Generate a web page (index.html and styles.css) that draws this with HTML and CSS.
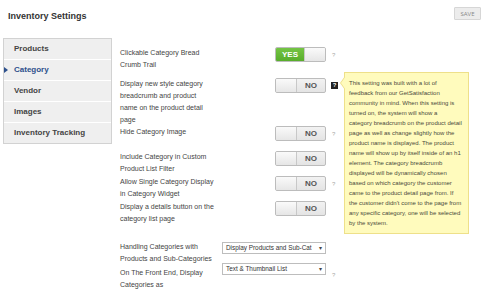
FILE: index.html
```html
<!DOCTYPE html>
<html lang="en">
<head>
	<meta charset="UTF-8">
	<title>Inventory Settings</title>
	<link rel="stylesheet" href="styles.css">
</head>
<body>
	<div class="page">
		<!-- header -->
		<div class="top">
			<h1>Inventory Settings</h1>
			<button class="save">SAVE</button>
		</div>

		<div class="main">
			<!-- left menu -->
			<ul class="side">
				<li>Products</li>
				<li class="active">Category</li>
				<li>Vendor</li>
				<li>Images</li>
				<li>Inventory Tracking</li>
			</ul>

			<!-- settings list -->
			<div class="settings">
				<div class="row gap7">
					<div class="label">Clickable Category Bread<br>Crumb Trail</div>
					<div class="ctl"><div class="toggle on"><span class="lab">YES</span><span class="knob"></span></div></div>
					<div class="help">?</div>
				</div>
				<div class="row">
					<div class="label">Display new style category<br>breadcrumb and product<br>name on the product detail<br>page</div>
					<div class="ctl"><div class="toggle off"><span class="knob"></span><span class="lab">NO</span></div></div>
					<div class="help"><span class="help_box">?</span></div>
				</div>
				<div class="row gap1">
					<div class="label">Hide Category Image</div>
					<div class="ctl"><div class="toggle off"><span class="knob"></span><span class="lab">NO</span></div></div>
					<div class="help">?</div>
				</div>
				<div class="row gap1">
					<div class="label">Include Category in Custom<br>Product List Filter</div>
					<div class="ctl"><div class="toggle off"><span class="knob"></span><span class="lab">NO</span></div></div>
					<div class="help"></div>
				</div>
				<div class="row gap1">
					<div class="label">Allow Single Category Display<br>in Category Widget</div>
					<div class="ctl"><div class="toggle off"><span class="knob"></span><span class="lab">NO</span></div></div>
					<div class="help">?</div>
				</div>
				<div class="row gap16">
					<div class="label">Display a details button on the<br>category list page</div>
					<div class="ctl"><div class="toggle off"><span class="knob"></span><span class="lab">NO</span></div></div>
					<div class="help"></div>
				</div>
				<div class="row gap2">
					<div class="label">Handling Categories with<br>Products and Sub-Categories</div>
					<div class="ctl"><div class="sel"><span class="sel_text">Display Products and Sub-Cat</span><span class="arrow">&#9662;</span></div></div>
					<div class="help"></div>
				</div>
				<div class="row">
					<div class="label">On The Front End, Display<br>Categories as</div>
					<div class="ctl"><div class="sel up"><span class="sel_text">Text &amp; Thumbnail List</span><span class="arrow">&#9662;</span></div></div>
					<div class="help">?</div>
				</div>
			</div>
		</div>

		<!-- tooltip for the breadcrumb setting -->
		<div class="tip">
			This setting was built with a lot of<br>
			feedback from our GetSatisfaction<br>
			community in mind. When this setting is<br>
			turned on, the system will show a<br>
			category breadcrumb on the product detail<br>
			page as well as change slightly how the<br>
			product name is displayed. The product<br>
			name will show up by itself inside of an h1<br>
			element. The category breadcrumb<br>
			displayed will be dynamically chosen<br>
			based on which category the customer<br>
			came to the product detail page from. If<br>
			the customer didn't come to the page from<br>
			any specific category, one will be selected<br>
			by the system.
		</div>
	</div>
</body>
</html>
```

FILE: styles.css
```css
	body{
		margin:0;
		background:#fff;
		font-family:"Liberation Sans", Arial, sans-serif;
		color:#444;
	}
	.page{
		position:relative;
		width:490px;
		height:291px;
		overflow:hidden;
	}
	.top{
		display:flex;
		justify-content:space-between;
		align-items:flex-start;
		height:38px;
	}
	.top h1{
		margin:11px 0 0 8px;
		font-size:9px;
		line-height:10px;
		font-weight:bold;
		color:#333;
	}
	.save{
		margin:7px 9px 0 0;
		width:27px;
		height:13px;
		padding:0;
		border:1px solid #d6d6d6;
		border-radius:1px;
		background:#ececec;
		font-family:"Open Sans", sans-serif;
		font-size:6px;
		color:#888;
	}
	.main{
		display:flex;
		align-items:flex-start;
	}
	.side{
		list-style:none;
		margin:0 0 0 3px;
		padding:0;
		width:109px;
		box-sizing:border-box;
		border:1px solid #d2d2d2;
		border-top:0;
		background:#efefef;
	}
	.side li{
		position:relative;
		height:20px;
		line-height:20px;
		border-top:1px solid #fff;
		padding-left:10px;
		font-size:8px;
		font-weight:bold;
		color:#444;
	}
	.side li:first-child{
		border-top:1px solid #d2d2d2;
	}
	.side li.active{
		color:#2c4f8c;
	}
	.side li.active::before{
		content:"";
		position:absolute;
		left:0;
		top:7px;
		border-left:4px solid #2c4f8c;
		border-top:3px solid transparent;
		border-bottom:3px solid transparent;
	}
	.settings{
		margin-left:8px;
		padding-top:9px;
	}
	.row{
		display:flex;
		align-items:flex-start;
		min-height:24px;
	}
	.gap1{ margin-bottom:1px; }
	.gap2{ margin-bottom:2px; }
	.gap7{ margin-bottom:7px; }
	.gap16{ margin-bottom:16px; }
	.label{
		width:99px;
		padding-right:1px;
		box-sizing:border-box;
		font-size:7px;
		line-height:12px;
		color:#444;
		white-space:nowrap;
	}
	.ctl{
		width:107px;
		display:flex;
		justify-content:flex-end;
	}
	.help{
		width:14px;
		padding-left:6px;
		box-sizing:border-box;
		font-size:6px;
		line-height:16px;
		color:#a8a8a8;
	}
	.help_box{
		display:block;
		margin:4px 0 0 -1px;
		width:7px;
		height:7px;
		background:#222;
		color:#fff;
		font-size:6px;
		font-weight:bold;
		line-height:7px;
		text-align:center;
	}
	.toggle{
		display:flex;
		width:51px;
		height:15px;
		box-sizing:border-box;
		border:1px solid #bcbcbc;
		border-radius:2px;
		overflow:hidden;
		font-size:8px;
		font-weight:bold;
		line-height:13px;
		background:linear-gradient(#f2f2f2,#e4e4e4);
	}
	.toggle .knob{
		width:20px;
		background:linear-gradient(#fafafa,#e6e6e6);
		border-left:1px solid #c8c8c8;
		border-right:1px solid #c8c8c8;
	}
	.toggle.on .knob{ border-right:0; }
	.toggle.off .knob{ border-left:0; }
	.toggle .lab{
		flex-grow:1;
		text-align:center;
	}
	.toggle.on .lab{
		background:linear-gradient(#74c444,#58ad2b);
		color:#fff;
	}
	.toggle.off .lab{
		color:#555;
	}
	.sel{
		display:flex;
		justify-content:space-between;
		width:104px;
		height:12px;
		margin-top:1px;
		box-sizing:border-box;
		border:1px solid #bdbdbd;
		background:#fff;
		padding:0 3px 0 3px;
		font-size:6.4px;
		line-height:10px;
		color:#333;
		overflow:hidden;
		white-space:nowrap;
	}
	.sel.up{ margin-top:-4px; }
	.sel .arrow{
		font-size:6px;
		color:#444;
	}
	.tip{
		position:absolute;
		left:344px;
		top:72px;
		width:125px;
		box-sizing:border-box;
		padding:5px 4px;
		border:1px solid #eee08a;
		background:#fffbbd;
		font-size:6px;
		line-height:10px;
		color:#4a4a3c;
		white-space:nowrap;
	}
	.tip::before{
		content:"";
		position:absolute;
		left:-5px;
		top:3px;
		border-right:5px solid #eee08a;
		border-top:7px solid transparent;
		border-bottom:7px solid transparent;
	}
	.tip::after{
		content:"";
		position:absolute;
		left:-4px;
		top:3px;
		border-right:5px solid #fffbbd;
		border-top:7px solid transparent;
		border-bottom:7px solid transparent;
	}
```
